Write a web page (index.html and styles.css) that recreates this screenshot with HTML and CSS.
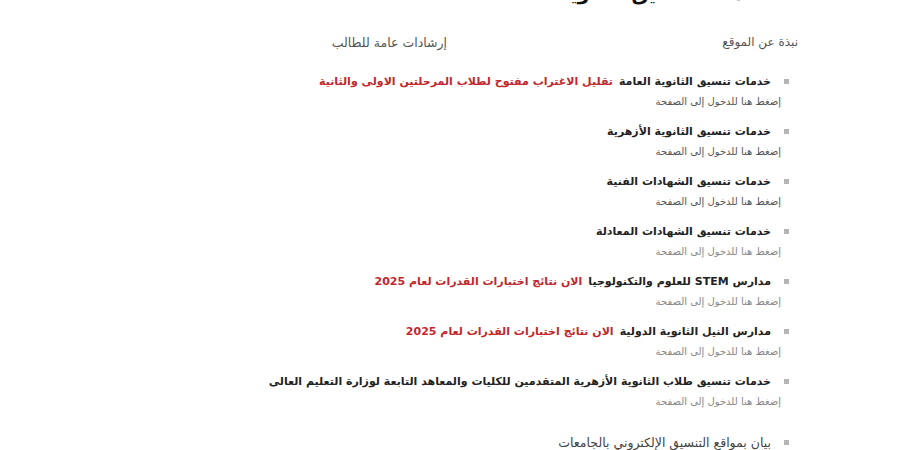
FILE: index.html
```html
<!DOCTYPE html>
<html lang="ar" dir="rtl">
<head>
<meta charset="utf-8">
<link rel="stylesheet" href="styles.css">
</head>
<body>
<div class="page">
  <h1 class="cut-title">خدمات تنسيق الثانوية العامة</h1>
  <nav class="toplinks">
    <a class="toplink first" href="#">نبذة عن الموقع</a>
    <a class="toplink" href="#">إرشادات عامة للطالب</a>
  </nav>
  <ul class="list">
    <li class="item">
      <div class="title"><span class="bullet"></span><b>خدمات تنسيق الثانوية العامة</b><span class="red">تقليل الاغتراب مفتوح لطلاب المرحلتين الاولى والثانية</span></div>
      <a class="sub dark" href="#">إضغط هنا للدخول إلى الصفحة</a>
    </li>
    <li class="item">
      <div class="title"><span class="bullet"></span><b>خدمات تنسيق الثانوية الأزهرية</b></div>
      <a class="sub dark" href="#">إضغط هنا للدخول إلى الصفحة</a>
    </li>
    <li class="item">
      <div class="title"><span class="bullet"></span><b>خدمات تنسيق الشهادات الفنية</b></div>
      <a class="sub dark" href="#">إضغط هنا للدخول إلى الصفحة</a>
    </li>
    <li class="item">
      <div class="title"><span class="bullet"></span><b>خدمات تنسيق الشهادات المعادلة</b></div>
      <a class="sub" href="#">إضغط هنا للدخول إلى الصفحة</a>
    </li>
    <li class="item">
      <div class="title"><span class="bullet"></span><b>مدارس STEM للعلوم والتكنولوجيا</b><span class="red">الان نتائج اختبارات القدرات لعام 2025</span></div>
      <a class="sub" href="#">إضغط هنا للدخول إلى الصفحة</a>
    </li>
    <li class="item">
      <div class="title"><span class="bullet"></span><b>مدارس النيل الثانوية الدولية</b><span class="red">الان نتائج اختبارات القدرات لعام 2025</span></div>
      <a class="sub" href="#">إضغط هنا للدخول إلى الصفحة</a>
    </li>
    <li class="item">
      <div class="title"><span class="bullet"></span><b>خدمات تنسيق طلاب الثانوية الأزهرية المتقدمين للكليات والمعاهد التابعة لوزارة التعليم العالى</b></div>
      <a class="sub" href="#">إضغط هنا للدخول إلى الصفحة</a>
    </li>
    <li class="item last">
      <div class="title plain"><span class="bullet"></span><span>بيان بمواقع التنسيق الإلكتروني بالجامعات</span></div>
    </li>
  </ul>
</div>
</body>
</html>
```
FILE: styles.css
```css
html, body {
  margin: 0;
  padding: 0;
  background: #ffffff;
}
body {
  direction: rtl;
  font-family: "DejaVu Sans", sans-serif;
  color: #222;
  overflow: hidden;
}
.page {
  padding-right: 102px;
}
.cut-title {
  margin: -19px 38px 0 0;
  font-size: 19px;
  font-weight: bold;
  color: #111;
  line-height: 24px;
}
.toplinks {
  display: flex;
  margin-top: 28px;
  height: 18px;
  align-items: center;
}
.toplink {
  font-size: 12px;
  color: #555;
  text-decoration: none;
}
.toplink.first {
  width: 351px;
}
.toplink:last-child {
  font-size: 12.5px;
}
.list {
  list-style: none;
  margin: 20px 17px 0 0;
  padding: 0;
  display: flex;
  flex-direction: column;
  gap: 8px;
}
.item {
  display: flex;
  flex-direction: column;
  align-items: flex-start;
}
.item.last {
  margin-top: 11px;
}
.title {
  display: flex;
  align-items: center;
  height: 20px;
  font-size: 11px;
  color: #222;
  white-space: nowrap;
}
.title b {
  font-weight: bold;
}
.title.plain {
  color: #444;
  font-size: 12.5px;
}
.bullet {
  width: 5px;
  height: 5px;
  background: #b5b5b5;
  margin-right: -8px;
  margin-left: 13px;
  flex: none;
}
.red {
  color: #c1272d;
  font-weight: bold;
  font-size: 11px;
  margin-right: 6px;
}
.sub {
  font-size: 10px;
  line-height: 22px;
  color: #888;
  text-decoration: none;
}
.sub.dark {
  color: #555;
}
```
